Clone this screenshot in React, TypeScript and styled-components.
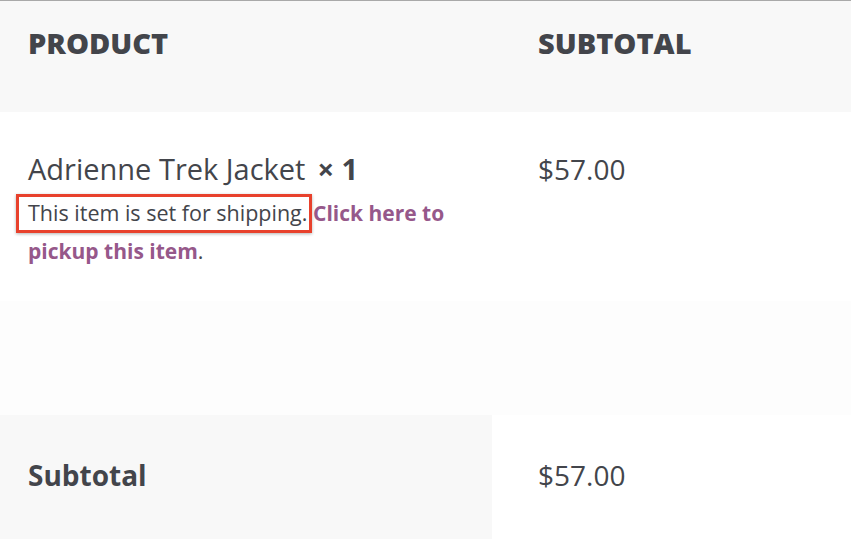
import React from "react";
import styled, { createGlobalStyle } from "styled-components";

const GlobalStyle = createGlobalStyle`
  html, body {
    margin: 0;
    padding: 0;
    background: #ffffff;
  }
  body {
    font-family: "Open Sans", "Liberation Sans", sans-serif;
    color: #43454b;
  }
`;

const Table = styled.div`
  width: 851px;
  border-top: 1px solid #a9a9a9;
`;

const Row = styled.div<{ $h: number; $cols: string; $bg?: string }>`
  display: grid;
  grid-template-columns: ${(p) => p.$cols};
  height: ${(p) => p.$h}px;
  background: ${(p) => p.$bg || "#ffffff"};
`;

const HeadCell = styled.div`
  padding: 22px 28px 0;
  font-size: 29px;
  font-weight: 800;
  line-height: 40px;
  text-transform: uppercase;
`;

const ProductCell = styled.div`
  padding: 37px 28px 0;
`;

const ProductName = styled.div`
  font-size: 29px;
  line-height: 40px;
`;

const Qty = styled.strong`
  font-weight: 700;
  margin-left: 12px;
`;

const Note = styled.div`
  font-size: 21.5px;
  line-height: 38px;
  margin-top: 5px;
`;

const Marked = styled.span`
  position: relative;

  &::after {
    content: "";
    position: absolute;
    left: -12px;
    right: -5px;
    top: -4px;
    bottom: -6px;
    border: 3px solid #e8412c;
    box-shadow: 0 1px 3px rgba(0, 0, 0, 0.3);
    pointer-events: none;
  }
`;

const PickupLink = styled.a`
  color: #96588a;
  font-size: 21px;
  font-weight: 700;
  text-decoration: none;
  cursor: pointer;
`;

const Amount = styled.div<{ $pad: string }>`
  font-size: 28px;
  line-height: 40px;
  padding: ${(p) => p.$pad};
`;

const FootLabel = styled.div`
  background: #f8f8f8;
  padding: 40px 28px 0;
  font-size: 28px;
  font-weight: 700;
  line-height: 40px;
`;

export default function App() {
  return (
    <>
      <GlobalStyle />
      <Table>
        <Row $h={111} $cols="510px 1fr" $bg="#f8f8f8">
          <HeadCell>Product</HeadCell>
          <HeadCell>Subtotal</HeadCell>
        </Row>
        <Row $h={189} $cols="510px 1fr">
          <ProductCell>
            <ProductName>
              Adrienne Trek Jacket<Qty>× 1</Qty>
            </ProductName>
            <Note>
              <Marked>This item is set for shipping.</Marked>{" "}
              <PickupLink>Click here to pickup this item</PickupLink>.
            </Note>
          </ProductCell>
          <Amount $pad="37px 28px 0">$57.00</Amount>
        </Row>
        <Row $h={114} $cols="1fr" $bg="#fdfdfd" />
        <Row $h={140} $cols="492px 1fr">
          <FootLabel>Subtotal</FootLabel>
          <Amount $pad="40px 46px 0">$57.00</Amount>
        </Row>
      </Table>
    </>
  );
}
